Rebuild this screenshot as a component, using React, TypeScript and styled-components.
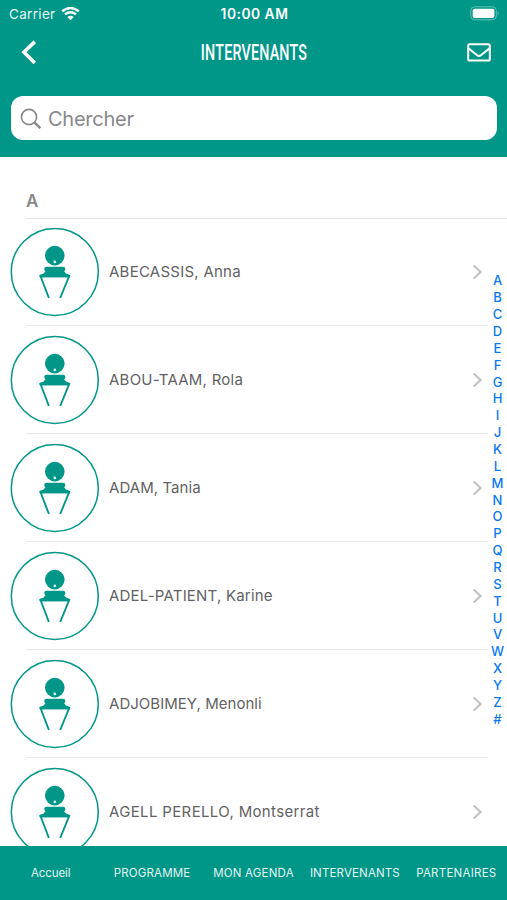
import React from "react";
import styled, { createGlobalStyle } from "styled-components";

const TEAL = "#009789";

const GlobalStyle = createGlobalStyle`
  * { box-sizing: border-box; }
  body { margin: 0; background: #fff; }
  button { border: 0; padding: 0; background: none; font: inherit; color: inherit; }
`;

const Screen = styled.div`
  width: 507px;
  height: 900px;
  display: flex;
  flex-direction: column;
  overflow: hidden;
  background: #fff;
  font-family: Inter, sans-serif;
`;

const Header = styled.header`
  flex: none;
  height: 157px;
  background: ${TEAL};
  color: #fff;
`;

const StatusBar = styled.div`
  height: 28px;
  padding: 0 7px 0 9px;
  display: grid;
  grid-template-columns: 1fr auto 1fr;
  align-items: center;
  font-size: 13.5px;
  line-height: 28px;
`;

const Carrier = styled.div`
  display: flex;
  align-items: center;
  gap: 5px;
  color: #e4f5f2;
  letter-spacing: 0.32px;
`;

const Clock = styled.div`
  font-weight: 600;
  font-size: 13.8px;
  letter-spacing: 0.5px;
`;

const Battery = styled.svg`
  justify-self: end;
  margin-bottom: 2px;
`;

const NavBar = styled.div`
  height: 50px;
  padding: 0 16px 0 21px;
  display: grid;
  grid-template-columns: 1fr auto 1fr;
  align-items: center;
`;

const IconButton = styled.button<{ $end?: boolean }>`
  display: flex;
  justify-self: ${(p) => (p.$end ? "end" : "start")};
  margin-top: ${(p) => (p.$end ? "-2px" : "0")};
`;

const Title = styled.h1`
  margin: 0;
  width: 106px;
  display: flex;
  justify-content: center;
  font: 500 22px/50px Roboto, sans-serif;
  letter-spacing: 0.3px;
  white-space: nowrap;
  transform: translateX(-2px) scaleX(0.65);
`;

const SearchField = styled.div`
  margin: 18px 10px 0 11px;
  height: 44px;
  padding: 1px 0 0 9px;
  display: flex;
  align-items: center;
  gap: 6px;
  border-radius: 12px;
  background: #fff;
  color: #88888b;
  font-size: 20px;
  letter-spacing: -0.25px;
`;

const Content = styled.main`
  flex: 1;
  min-height: 0;
  position: relative;
  overflow: hidden;
`;

const SectionHeading = styled.h2`
  margin: 0 0 0 26px;
  height: 62px;
  padding-top: 32px;
  border-bottom: 1px solid #e4e4e5;
  color: #88888a;
  font-size: 17px;
  font-weight: 600;
  line-height: 24px;
`;

const Row = styled.div`
  height: 108px;
  padding: 0 24px 2px 10px;
  display: flex;
  align-items: center;
  background: linear-gradient(#e9e9ea, #e9e9ea) 26px 106px / 462px 1px no-repeat;
`;

const Name = styled.span<{ $spacing: number }>`
  flex: 1;
  margin-left: 9px;
  color: #626264;
  font-size: 15px;
  line-height: 20px;
  letter-spacing: ${(p) => p.$spacing}px;
`;

const IndexRail = styled.nav`
  position: absolute;
  right: 0;
  top: 115px;
  width: 19px;
  display: grid;
  grid-auto-rows: 16.87px;
  justify-items: center;
  align-items: center;
  color: #0879f5;
  font-size: 13px;
  font-weight: 550;
  line-height: 16px;
`;

const TabBar = styled.footer`
  flex: none;
  height: 54px;
  display: grid;
  grid-template-columns: repeat(5, 1fr);
  background: ${TEAL};
`;

const Tab = styled.button<{ $spacing: number }>`
  display: flex;
  align-items: center;
  justify-content: center;
  white-space: nowrap;
  color: #e0f4f1;
  font-size: 11.5px;
  letter-spacing: ${(p) => p.$spacing}px;
`;

const Avatar = () => (
  <svg width="90" height="90" viewBox="0 0 90 90" fill="none">
    <circle cx="44.8" cy="45" r="43.5" stroke={TEAL} strokeWidth="1.5" />
    <circle cx="44.8" cy="28.6" r="9.8" fill={TEAL} />
    <circle cx="44.8" cy="34.9" r="1.3" fill="#dff5f1" />
    <path
      d="M36.5 39.8h16.6q2.2 0 2.2 2.2 0 1.7-1.2 2.5 1.2.6 1.5 1.8l4.4 1.6v2.3H29.6v-2.3l4.4-1.6q.3-1.2 1.5-1.8-1.2-.8-1.2-2.5 0-2.2 2.2-2.2Z"
      fill={TEAL}
    />
    <path d="M38.9 71 30.6 49.3H59.1L50.2 71" stroke={TEAL} strokeWidth="1.9" />
  </svg>
);

const Chevron = () => (
  <svg width="11" height="16" viewBox="0 0 11 16" fill="none">
    <path d="m1.7 1.5 6.9 6.5-6.9 6.5" stroke="#c2c2c4" strokeWidth="2.2" />
  </svg>
);

const people = [
  { name: "ABECASSIS, Anna", spacing: 0.25 },
  { name: "ABOU-TAAM, Rola", spacing: 0.24 },
  { name: "ADAM, Tania", spacing: 0.06 },
  { name: "ADEL-PATIENT, Karine", spacing: 0.2 },
  { name: "ADJOBIMEY, Menonli", spacing: 0.03 },
  { name: "AGELL PERELLO, Montserrat", spacing: 0.35 },
];

const tabs = [
  { label: "Accueil", spacing: -0.08 },
  { label: "PROGRAMME", spacing: 0.16 },
  { label: "MON AGENDA", spacing: 0.2 },
  { label: "INTERVENANTS", spacing: 0.15 },
  { label: "PARTENAIRES", spacing: 0.25 },
];

export default function App() {
  return (
    <Screen>
      <GlobalStyle />
      <Header>
        <StatusBar>
          <Carrier>
            Carrier
            <svg width="19" height="15" viewBox="0 0 19 15" fill="none">
              <path d="M1.2 4.2Q9.5-2.2 17.8 4.2M4 7.4q5.5-4.2 11 0" stroke="#fff" strokeWidth="2.4" />
              <path d="M6.3 9.9q3.2-2.4 6.4 0L9.5 13.2Z" fill="#fff" />
            </svg>
          </Carrier>
          <Clock>10:00 AM</Clock>
          <Battery width="30" height="15" viewBox="0 0 30 15">
            <rect x=".8" y=".8" width="25.5" height="13" rx="3.8" fill="none" stroke="#62beb4" />
            <rect x="2.7" y="2.7" width="21.7" height="9.2" rx="2" fill="#fff" />
            <path d="M27.6 5q2 2.2 0 4.6Z" fill="#62beb4" />
          </Battery>
        </StatusBar>
        <NavBar>
          <IconButton aria-label="Retour">
            <svg width="16" height="26" viewBox="0 0 16 26" fill="none">
              <path d="M13.8 1.6 3 12.3 13.8 23" stroke="#fff" strokeWidth="3.6" />
            </svg>
          </IconButton>
          <Title>INTERVENANTS</Title>
          <IconButton $end aria-label="Messages">
            <svg width="24" height="19" viewBox="0 0 24 19" fill="none" stroke="#fff" strokeWidth="2">
              <rect x="1.2" y="1.3" width="21.6" height="16.2" rx="1.6" />
              <path d="m1.5 5.4 8.7 6.9q1.8 1.2 3.6 0l8.7-6.9" />
            </svg>
          </IconButton>
        </NavBar>
        <SearchField>
          <svg width="22" height="22" viewBox="0 0 22 22" fill="none" stroke="#88888b">
            <circle cx="9" cy="9" r="7.6" strokeWidth="1.6" />
            <path d="m14.4 14.4 6 5.8" strokeWidth="2.3" />
          </svg>
          Chercher
        </SearchField>
      </Header>
      <Content>
        <SectionHeading>A</SectionHeading>
        {people.map((person) => (
          <Row key={person.name}>
            <Avatar />
            <Name $spacing={person.spacing}>{person.name}</Name>
            <Chevron />
          </Row>
        ))}
        <IndexRail>
          {"ABCDEFGHIJKLMNOPQRSTUVWXYZ#".split("").map((letter) => (
            <span key={letter}>{letter}</span>
          ))}
        </IndexRail>
      </Content>
      <TabBar>
        {tabs.map((tab) => (
          <Tab key={tab.label} $spacing={tab.spacing}>
            {tab.label}
          </Tab>
        ))}
      </TabBar>
    </Screen>
  );
}
